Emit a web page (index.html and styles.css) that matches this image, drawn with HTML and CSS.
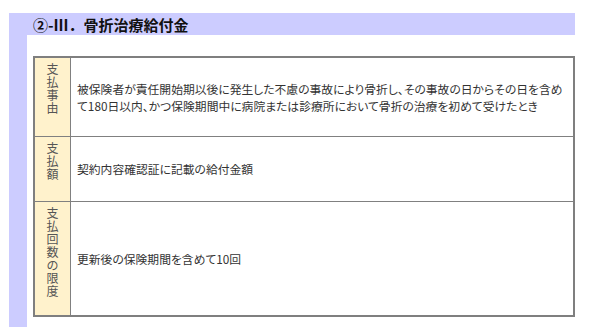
FILE: index.html
```html
<!DOCTYPE html>
<html lang="ja">
<head>
<meta charset="utf-8">
<link rel="stylesheet" href="styles.css">
</head>
<body>
<div class="frame">
  <h2 class="title">②-Ⅲ．骨折治療給付金</h2>
  <div class="side">
    <div class="content">
      <table class="benefit">
        <tr class="r1">
          <th><span class="vt">支払事由</span></th>
          <td>被保険者が責任開始期以後に発生した不慮の事故により骨折し、その事故の日からその日を含め<br>て180日以内、かつ保険期間中に病院または診療所において骨折の治療を初めて受けたとき</td>
        </tr>
        <tr class="r2">
          <th><span class="vt">支払額</span></th>
          <td>契約内容確認証に記載の給付金額</td>
        </tr>
        <tr class="r3">
          <th><span class="vt">支払回数の限度</span></th>
          <td>更新後の保険期間を含めて10回</td>
        </tr>
      </table>
    </div>
  </div>
</div>
</body>
</html>
```

FILE: styles.css
```css
html, body {
  margin: 0;
  padding: 0;
  background: #ffffff;
  overflow: hidden;
}
body {
  padding: 13px 18px 0 9px;
  font-family: "Noto Sans CJK JP", "Noto Sans", sans-serif;
  color: #333333;
}
.frame {
  background: #ccccff;
}
.title {
  margin: 0;
  height: 20px;
  padding: 2px 0 0 24px;
  font-family: "Noto Sans CJK JP", sans-serif;
  font-size: 15px;
  line-height: 20px;
  font-weight: bold;
  color: #111111;
}
.side {
  padding-left: 18px;
}
.content {
  background: #ffffff;
  padding: 21px 0 10px 6px;
}
.benefit {
  width: 542px;
  border-collapse: collapse;
  border: 2px solid #7f7f7f;
  font-size: 11.8px;
}
.benefit th,
.benefit td {
  border: 1px solid #808080;
}
.benefit th {
  width: 35px;
  background: #fff2cc;
  font-weight: normal;
  font-size: 12px;
  vertical-align: top;
  padding: 4px 0 0 0;
  text-align: center;
  color: #555555;
}
.vt {
  display: inline-block;
  width: 1em;
  line-height: 13px;
  word-break: break-all;
}
.benefit td {
  padding: 0 4px 0 6px;
  line-height: 17px;
  vertical-align: middle;
  white-space: nowrap;
  font-feature-settings: "palt";
}
.r1 { height: 79px; }
.r2 { height: 65px; }
.r3 { height: 115px; }
```
